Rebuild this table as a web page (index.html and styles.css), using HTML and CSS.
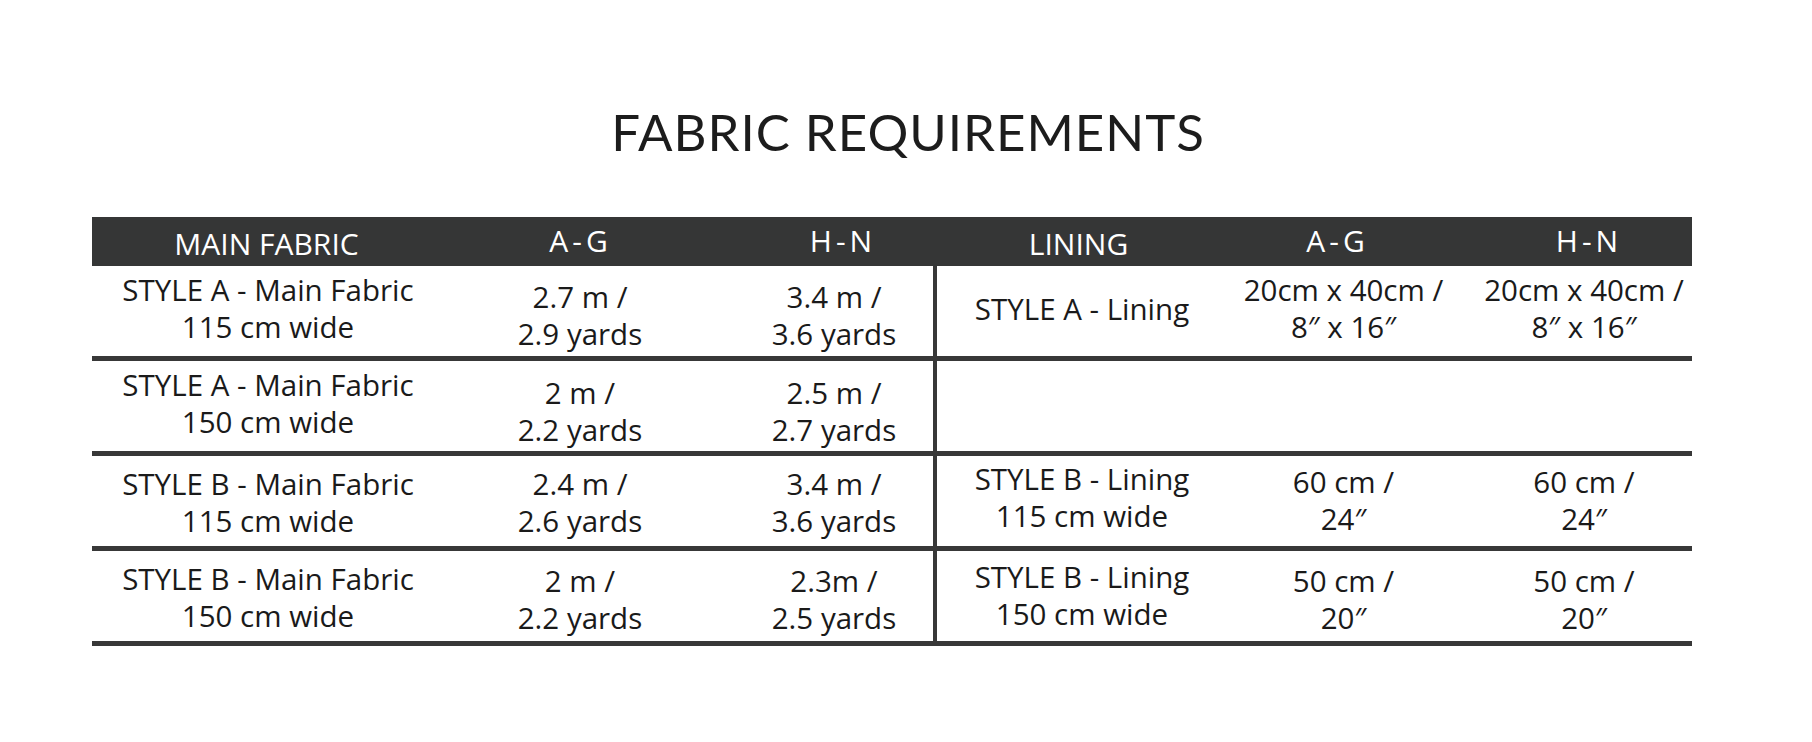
FILE: index.html
```html
<!DOCTYPE html>
<html lang="en">
<head>
<meta charset="utf-8">
<title>Fabric Requirements</title>
<link rel="stylesheet" href="styles.css">
</head>
<body>
<main class="page">
  <h1 class="title">FABRIC REQUIREMENTS</h1>
  <div class="table">
    <div class="th">MAIN FABRIC</div>
    <div class="th th-range">A-G</div>
    <div class="th th-range th-c3">H-N</div>
    <div class="th">LINING</div>
    <div class="th th-range th-c5">A-G</div>
    <div class="th th-range th-c6">H-N</div>

    <div class="td label">STYLE A - Main Fabric<br>115 cm wide</div>
    <div class="td val r1">2.7 m /<br>2.9 yards</div>
    <div class="td val c3 r1">3.4 m /<br>3.6 yards</div>
    <div class="td label c4">STYLE A - Lining</div>
    <div class="td val">20cm x 40cm /<br>8″ x 16″</div>
    <div class="td val c6">20cm x 40cm /<br>8″ x 16″</div>

    <div class="td label">STYLE A - Main Fabric<br>150 cm wide</div>
    <div class="td val r2">2 m /<br>2.2 yards</div>
    <div class="td val c3 r2">2.5 m /<br>2.7 yards</div>
    <div class="td c4"></div>
    <div class="td"></div>
    <div class="td"></div>

    <div class="td label low">STYLE B - Main Fabric<br>115 cm wide</div>
    <div class="td val r3">2.4 m /<br>2.6 yards</div>
    <div class="td val c3 r3">3.4 m /<br>3.6 yards</div>
    <div class="td label c4 r3l">STYLE B - Lining<br>115 cm wide</div>
    <div class="td val r3b">60 cm /<br>24″</div>
    <div class="td val c6 r3b">60 cm /<br>24″</div>

    <div class="td label low">STYLE B - Main Fabric<br>150 cm wide</div>
    <div class="td val r4">2 m /<br>2.2 yards</div>
    <div class="td val c3 r4">2.3m /<br>2.5 yards</div>
    <div class="td label c4 r4l">STYLE B - Lining<br>150 cm wide</div>
    <div class="td val r4">50 cm /<br>20″</div>
    <div class="td val c6 r4">50 cm /<br>20″</div>
  </div>
</main>
</body>
</html>
```
FILE: styles.css
```css
html, body {
  margin: 0;
  padding: 0;
  background: #ffffff;
}

.page {
  width: 1812px;
  padding-top: 101px;
  box-sizing: border-box;
}

.title {
  margin: 0 0 0 4px;
  text-align: center;
  font-family: "Lato", "DejaVu Sans", sans-serif;
  font-weight: 400;
  font-size: 51px;
  line-height: 62px;
  letter-spacing: 1px;
  color: #1c1c1c;
}

.table {
  margin: 54px 0 0 92px;
  width: 1600px;
  display: grid;
  grid-template-columns: 352px 272px 217px 294px 233px 232px;
  grid-auto-rows: auto;
  font-family: "Open Sans", "Noto Sans", sans-serif;
  color: #1a1a1a;
}

.th {
  background: #353636;
  color: #ffffff;
  height: 49px;
  font-size: 30px;
  line-height: 36px;
  display: flex;
  align-items: flex-end;
  justify-content: center;
  padding-bottom: 4px;
  padding-right: 3px;
  box-sizing: border-box;
}

.th-range {
  padding-bottom: 7px;
  letter-spacing: 4px;
  text-indent: 4px;
}

.th-c3 {
  padding-left: 36px;
}

.th-c5 {
  padding-right: 16px;
}

.th-c6 {
  padding-left: 22px;
  padding-right: 0;
}

.td {
  height: 95px;
  box-sizing: border-box;
  border-bottom: 5px solid #383838;
  font-size: 29.5px;
  line-height: 37px;
  display: flex;
  align-items: center;
  justify-content: center;
  text-align: center;
  padding-bottom: 6px;
}

.c3 {
  padding-left: 19px;
}

.c4 {
  border-left: 4px solid #383838;
}

.c6 {
  padding-left: 16px;
}

.label.low {
  padding-top: 1px;
  padding-bottom: 0;
}

.val.r1 {
  padding-top: 8px;
  padding-bottom: 0;
}

.val.r2 {
  padding-top: 10px;
  padding-bottom: 0;
}

.val.r3 {
  padding-top: 2px;
  padding-bottom: 0;
}

.val.r3b {
  padding-top: 0;
  padding-bottom: 2px;
}

.label.r3l {
  padding-bottom: 9px;
}

.label.r4l {
  padding-bottom: 2px;
}

.val.r4 {
  padding-top: 6px;
  padding-bottom: 0;
}
```
